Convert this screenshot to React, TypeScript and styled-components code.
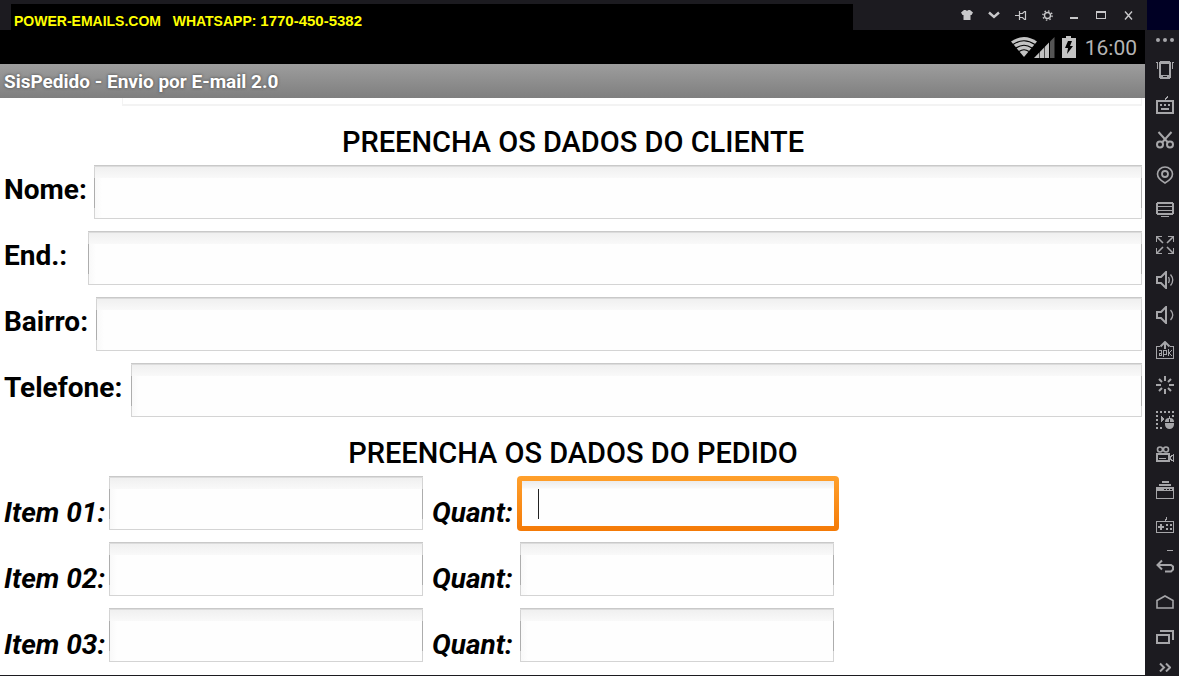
import React from "react";
import styled, { createGlobalStyle, css } from "styled-components";

const GlobalStyle = createGlobalStyle`
  *, *::before, *::after { box-sizing: border-box; }
  body { margin: 0; background: #1c1b20; font-family: Roboto, "Liberation Sans", sans-serif; }
  button, input { font: inherit; }
`;

const Page = styled.div`
  display: flex;
  flex-direction: column;
  min-height: 100vh;
`;

const TitleBar = styled.header`
  display: flex;
  height: 30px;
  background: #1c1b20;
`;

const Banner = styled.div`
  flex: 1;
  margin: 4px 0 0 11px;
  padding: 9px 3px 0;
  background: #000;
  color: #ff0;
  font: bold 14px/16px "Liberation Sans", Arial, sans-serif;
  white-space: pre;
`;

const Phone = styled.span`
  font-size: 15px;
`;

const WindowControls = styled.div`
  display: flex;
  justify-content: flex-end;
  width: 294px;
  padding-right: 5px;
`;

const IconButton = styled.button<{ $w?: number; $h?: number }>`
  display: flex;
  align-items: center;
  justify-content: center;
  flex: none;
  width: ${(p) => (p.$w ? `${p.$w}px` : "100%")};
  height: ${(p) => p.$h ?? 30}px;
  padding: 0;
  border: 0;
  background: none;
  color: #a6a6a9;
  svg { display: block; }
`;

const ControlButton = styled(IconButton)`
  color: #c8c8ca;
`;

const Corner = styled.div`
  width: 32px;
  background: #000024;
`;

const Body = styled.div`
  display: flex;
  flex: 1;
`;

const Screen = styled.main`
  display: flex;
  flex: 1;
  flex-direction: column;
  min-width: 0;
  background: #fff;
  border-bottom: 1px solid #1c1b20;
`;

const StatusBar = styled.div`
  display: flex;
  align-items: center;
  justify-content: flex-end;
  height: 34px;
  padding-right: 8px;
  background: #000;
  color: #b4b4b4;
  font-size: 21px;
  line-height: 34px;
  svg { display: block; }
`;

const Clock = styled.time`
  margin-left: 8px;
  padding-top: 2px;
`;

const AppBar = styled.h1`
  height: 34px;
  margin: 0;
  padding-left: 4px;
  background: linear-gradient(#9d9d9d, #7f7f7f);
  color: #fff;
  font-size: 19px;
  font-weight: 700;
  line-height: 36px;
  text-shadow: 0 0 3px #444;
`;

const Form = styled.form`
  display: flex;
  flex-direction: column;
  padding: 0 3px 12px 4px;
`;

const ScrolledEdge = styled.div`
  height: 8px;
  margin-left: 118px;
  border: solid #f3f3f3;
  border-width: 0 1px 2px;
`;

const Heading = styled.h2`
  margin: 20px 0 7px;
  color: #000;
  font-size: 29px;
  font-weight: 500;
  line-height: 32px;
  text-align: center;
`;

const Rows = styled.div`
  display: flex;
  flex-direction: column;
  gap: 12px;
`;

const FieldRow = styled.div`
  display: flex;
`;

const ItemRow = styled.div`
  display: grid;
  grid-template-columns: 105px 314px 97px 314px;
  height: 54px;
`;

const Label = styled.label<{ $gap?: number }>`
  flex: none;
  margin-right: ${(p) => p.$gap ?? 7}px;
  color: #000;
  font-size: 28px;
  font-weight: 700;
  line-height: 50px;
`;

const ItemLabel = styled(Label)<{ $inset?: boolean }>`
  margin-right: 0;
  padding: 12px 0 0 ${(p) => (p.$inset ? 9 : 0)}px;
  font-style: italic;
`;

const line = (c: string) => `linear-gradient(${c}, ${c})`;

const TextInput = styled.input<{ $focused?: boolean }>`
  display: block;
  flex: 1;
  width: 100%;
  min-width: 0;
  height: 54px;
  padding: 0 18px;
  border: 0;
  outline: 0;
  font-size: 24px;
  background:
    ${line("#adadad")} 0 13px / 1px 30px no-repeat,
    ${line("#adadad")} 100% 13px / 1px 30px no-repeat,
    ${line("#c9c9c9")} 0 0 / 100% 1px no-repeat,
    ${line("#dcdcdc")} 0 1px / 100% 1px no-repeat,
    ${line("#d4d4d4")} 0 100% / 100% 1px no-repeat,
    ${line("#d4d4d4")} 0 0 / 1px 100% no-repeat,
    ${line("#d4d4d4")} 100% 0 / 1px 100% no-repeat,
    linear-gradient(#eeeeee, #f9f9f9) 0 0 / 100% 13px no-repeat,
    linear-gradient(90deg, #f8f8f8, #fefefe 8px);
  ${(p) =>
    p.$focused &&
    css`
      height: 45px;
      caret-color: transparent;
      background: linear-gradient(#ececec, #f8f8f8 7px, #fefefe 8px);
    `}
`;

const FocusRing = styled.div`
  position: relative;
  height: 55px;
  margin: 0 -5px 0 -3px;
  padding: 5px;
  border-radius: 4px;
  background: linear-gradient(#ffa02c, #f47a07);
`;

const Caret = styled.span`
  position: absolute;
  top: 13px;
  left: 21px;
  width: 1px;
  height: 30px;
  background: #222;
`;

const Rail = styled.nav`
  display: flex;
  flex: none;
  flex-direction: column;
  width: 34px;
  padding-left: 5px;
  background: #1c1b20;
`;

function Glyph({ w = 18, h = 18, sharp = true, children }: { w?: number; h?: number; sharp?: boolean; children: React.ReactNode }) {
  return (
    <svg
      width={w}
      height={h}
      viewBox={`0 0 ${w} ${h}`}
      fill="none"
      stroke="currentColor"
      strokeWidth="1"
      shapeRendering={sharp ? "crispEdges" : "auto"}
      aria-hidden="true"
    >
      {children}
    </svg>
  );
}

const solid = { fill: "currentColor", stroke: "none" };

const controls: { name: string; icon: React.ReactNode }[] = [
  { name: "Temas", icon: <Glyph w={12} h={10} sharp={false}><path {...solid} d="M3 0h1.500q1.500 1.500 3 0H9l3 2.500-1.500 2.500H9.500V10h-7V5H1.500L0 2.500z" /></Glyph> },
  { name: "Menu", icon: <Glyph w={12} h={8} sharp={false}><path d="M1 1.500l5 4.500 5-4.500" strokeWidth="2.400" /></Glyph> },
  { name: "Fixar", icon: <Glyph w={12} h={11} sharp={false}><path d="M0 5.500h4M4.500 1v9M5 3.500h2.500l2-2h1v8h-1l-2-2H5" strokeWidth="1.200" /></Glyph> },
  { name: "Ajustes", icon: <Glyph w={11} h={11} sharp={false}><circle cx="5.500" cy="5.500" r="3" strokeWidth="1.400" /><circle cx="5.500" cy="5.500" r="4.600" strokeWidth="1.400" strokeDasharray="1.500 2.110" /></Glyph> },
  { name: "Minimizar", icon: <Glyph w={9} h={10}><path {...solid} d="M0 7h8v2H0z" /></Glyph> },
  { name: "Maximizar", icon: <Glyph w={11} h={9}><path d="M.5 .5h9v7h-9z" /><path {...solid} d="M0 0h10v2H0z" /></Glyph> },
  { name: "Fechar", icon: <Glyph w={9} h={9} sharp={false}><path d="M1 .5l7 8M8 .5l-7 8" strokeWidth="1.400" /></Glyph> },
];

const speaker = <path d="M1 6h4l5-5v16l-5-5H1z" strokeWidth="2" />;

const tools: { name: string; h?: number; icon: React.ReactNode }[] = [
  { name: "Mais opções", h: 22, icon: <Glyph h={6} sharp={false}><g {...solid}><circle cx="2" cy="2" r="2" /><circle cx="9" cy="2" r="2" /><circle cx="16" cy="2" r="2" /></g></Glyph> },
  { name: "Agitar", icon: <Glyph><path {...solid} fillRule="evenodd" d="M4 0h10v1h1v16h-1v1H4v-1H3V1h1zM5 3v11h8V3zM7 15v1h4v-1z" /><path d="M0 1.500h1.500V8M18 1.500h-1.500V8" /></Glyph> },
  { name: "Teclado", icon: <Glyph><rect x="1" y="5" width="16" height="12" strokeWidth="2" /><path {...solid} d="M9 2h1V1h1V0h1v2h-1v1h-1v1H9zM4 8h2v2H4zM8 8h2v2H8zM12 8h2v2h-2zM5 12h8v2H5z" /></Glyph> },
  { name: "Recortar", icon: <Glyph sharp={false}><path d="M2.500 1l9 10M15.500 1l-9 10" strokeWidth="2" /><circle cx="4" cy="13.500" r="3" strokeWidth="2" /><circle cx="14" cy="13.500" r="3" strokeWidth="2" /></Glyph> },
  { name: "Localização", icon: <Glyph sharp={false}><path d="M9 17C4.500 14.500 1.500 11.500 1.500 8a7.500 7 0 0 1 15 0c0 3.500-3 6.500-7.500 9z" strokeWidth="1.600" /><circle cx="9" cy="8" r="3" strokeWidth="1.800" /></Glyph> },
  { name: "Tela", icon: <Glyph h={16}><path {...solid} fillRule="evenodd" d="M1 0h16v1h1v11h-1v1H1v-1H0V1h1zM2 2v9h14V2z" /><path d="M2 4.500h14M2 8.500h14M5 14.500h8" /></Glyph> },
  { name: "Tela cheia", icon: <Glyph><path d="M0 .5h6M.5 0v6M12 .5h6M17.500 0v6M0 17.500h6M.5 12v6M12 17.500h6M17.500 12v6" /><path d="M1 1l6 6M17 1l-6 6M1 17l6-6M17 17l-6-6" strokeWidth="1.600" shapeRendering="auto" /></Glyph> },
  { name: "Aumentar volume", icon: <Glyph sharp={false}>{speaker}<path d="M12.500 6q1.500 3 0 6M14.500 3.500q4.500 5.500 0 11" strokeWidth="1.300" /></Glyph> },
  { name: "Diminuir volume", icon: <Glyph sharp={false}>{speaker}<path d="M14.500 4q4.500 5 0 10" strokeWidth="1.300" /></Glyph> },
  {
    name: "Instalar pacote",
    icon: (
      <Glyph>
        <path d="M0 5.500h4M.5 5v12.500h17V5M14 5.500h4" />
        <path d="M9 1v7M4.500 5.500L9 1l4.500 4.500" strokeWidth="2" shapeRendering="auto" />
        <path d="M3 9.500h2.500v5H3.500v-2H5M7.500 16V9.500h3v4h-3M12.500 8v7M15 9v1l-2 2 2 2v1" />
      </Glyph>
    ),
  },
  { name: "Carregar", icon: <Glyph sharp={false}><path d="M9 0v5M9 13v5M0 9h5M13 9h5M3 3l3 3M12 12l3 3M15 3l-3 3M6 12l-3 3" strokeWidth="2" /></Glyph> },
  {
    name: "Gravar macro",
    icon: (
      <Glyph>
        <path d="M0 1h18M1 0v18M0 17h8" strokeWidth="2" strokeDasharray="2 2" />
        <path d="M17 0v6" strokeWidth="2" strokeDasharray="2 2" />
        <path {...solid} d="M5 5l4 3-4 3z" />
        <path {...solid} shapeRendering="auto" d="M9 12h9v1.500a4.500 4.500 0 0 1-9 0zM9 11q0-4 4-4v4zM14 11V7q4 0 4 4z" />
        <path d="M13.500 4.500v3" />
      </Glyph>
    ),
  },
  { name: "Gravar vídeo", icon: <Glyph><circle cx="4" cy="3.500" r="2.500" strokeWidth="1.600" shapeRendering="auto" /><circle cx="10" cy="3.500" r="2.500" strokeWidth="1.600" shapeRendering="auto" /><rect x="1" y="8" width="12" height="7" strokeWidth="2" /><path d="M0 15.500h14M3 12.500h7" /><path d="M14 10.500h1l2.500-2v7l-2.500-2h-1z" /></Glyph> },
  { name: "Janelas", icon: <Glyph><path {...solid} d="M6 0h7v2H6zM3 3h12v2H3zM0 6h18v4H0z" /><rect x=".5" y="9.500" width="17" height="8" /><path stroke="#1c1b20" d="M8 8h2M11 8h2M14 8h2" /></Glyph> },
  { name: "Controle", icon: <Glyph h={16}><path d="M9.500 4V2.500h1V0" /><rect x=".5" y="4.500" width="17" height="11" /><path {...solid} d="M4 7h2v2h2v2H6v2H4v-2H2V9h2zM10 7h2v2h-2zM14 7h2v2h-2zM10 11h2v2h-2zM14 11h2v2h-2z" /></Glyph> },
  { name: "Voltar", h: 42, icon: <Glyph h={26} sharp={false}><path d="M11 .5h6" /><path d="M6 10.500l-4.500 4.500L6 19.500M2 15h13l2 1.500v3L15 21.500H9" strokeWidth="2" /></Glyph> },
  { name: "Início", icon: <Glyph h={14} sharp={false}><path d="M1 5.500L9 1l8 4.500V13H1z" strokeWidth="1.600" /></Glyph> },
  { name: "Recentes", icon: <Glyph h={14}><rect x="1" y="5" width="12" height="8" strokeWidth="2" /><path d="M4 1h13v9" strokeWidth="2" /></Glyph> },
  { name: "Expandir", h: 22, icon: <Glyph w={12} h={13} sharp={false}><path d="M1 4.500l4 4-4 4M7 4.500l4 4-4 4" strokeWidth="2" /></Glyph> },
];

function StatusIcons() {
  return (
    <svg width="66" height="22" viewBox="0 0 66 22" aria-hidden="true">
      <path fill="#c3c3c3" d="M13 21L0 5.500Q13-3.500 26 5.500z" />
      <path fill="none" stroke="#000" strokeWidth="1.200" d="M2 8.500q11-7.500 22 0M5 12q8-5.500 16 0M8 15.500q5-3.500 10 0" />
      <path fill="#c3c3c3" d="M23 22L38 6.500V22z" />
      <path fill="#555" d="M39 5.500L43.500 1v21H39z" />
      <path stroke="#000" strokeWidth=".6" d="M28.500 13v9M33.500 8v14M38.500 4v18" />
      <path fill="#c3c3c3" d="M55 0h5v2h5v20H51V2h4z" />
      <path fill="#000" d="M57 5h4l-2 5h3l-6 8 1-6h-3z" />
    </svg>
  );
}

const clientFields = [
  { id: "nome", label: "Nome:", gap: 7 },
  { id: "endereco", label: "End.:", gap: 21 },
  { id: "bairro", label: "Bairro:", gap: 8 },
  { id: "telefone", label: "Telefone:", gap: 9 },
];

export default function App() {
  return (
    <Page>
      <GlobalStyle />
      <TitleBar>
        <Banner>
          {"POWER-EMAILS.COM   WHATSAPP: "}
          <Phone>1770-450-5382</Phone>
        </Banner>
        <WindowControls>
          {controls.map((c) => (
            <ControlButton key={c.name} type="button" $w={27} aria-label={c.name}>{c.icon}</ControlButton>
          ))}
        </WindowControls>
        <Corner />
      </TitleBar>
      <Body>
        <Screen>
          <StatusBar>
            <StatusIcons />
            <Clock>16:00</Clock>
          </StatusBar>
          <AppBar>SisPedido - Envio por E-mail 2.0</AppBar>
          <Form>
            <ScrolledEdge />
            <Heading>PREENCHA OS DADOS DO CLIENTE</Heading>
            <Rows>
              {clientFields.map((f) => (
                <FieldRow key={f.id}>
                  <Label htmlFor={f.id} $gap={f.gap}>{f.label}</Label>
                  <TextInput id={f.id} type="text" />
                </FieldRow>
              ))}
            </Rows>
            <Heading>PREENCHA OS DADOS DO PEDIDO</Heading>
            <Rows>
              {["01", "02", "03"].map((n) => (
                <ItemRow key={n}>
                  <ItemLabel htmlFor={`item${n}`}>{`Item ${n}:`}</ItemLabel>
                  <TextInput id={`item${n}`} type="text" />
                  <ItemLabel htmlFor={`quant${n}`} $inset>Quant:</ItemLabel>
                  {n === "01" ? (
                    <FocusRing>
                      <TextInput id={`quant${n}`} type="text" $focused />
                      <Caret />
                    </FocusRing>
                  ) : (
                    <TextInput id={`quant${n}`} type="text" />
                  )}
                </ItemRow>
              ))}
            </Rows>
          </Form>
        </Screen>
        <Rail aria-label="Ferramentas">
          {tools.map((t) => (
            <IconButton key={t.name} type="button" $h={t.h ?? 35} aria-label={t.name}>{t.icon}</IconButton>
          ))}
        </Rail>
      </Body>
    </Page>
  );
}
